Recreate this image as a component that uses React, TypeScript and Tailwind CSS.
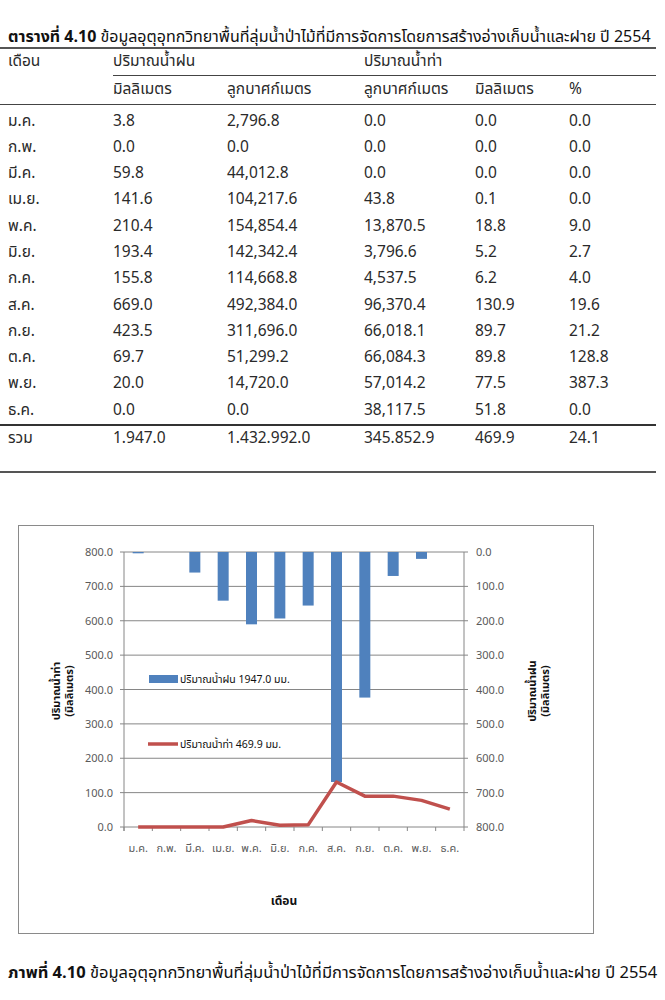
const FONT = '"Noto Sans Thai", "Noto Sans", "DejaVu Sans", sans-serif'

const rows = [
  ["ม.ค.", "3.8", "2,796.8", "0.0", "0.0", "0.0"],
  ["ก.พ.", "0.0", "0.0", "0.0", "0.0", "0.0"],
  ["มี.ค.", "59.8", "44,012.8", "0.0", "0.0", "0.0"],
  ["เม.ย.", "141.6", "104,217.6", "43.8", "0.1", "0.0"],
  ["พ.ค.", "210.4", "154,854.4", "13,870.5", "18.8", "9.0"],
  ["มิ.ย.", "193.4", "142,342.4", "3,796.6", "5.2", "2.7"],
  ["ก.ค.", "155.8", "114,668.8", "4,537.5", "6.2", "4.0"],
  ["ส.ค.", "669.0", "492,384.0", "96,370.4", "130.9", "19.6"],
  ["ก.ย.", "423.5", "311,696.0", "66,018.1", "89.7", "21.2"],
  ["ต.ค.", "69.7", "51,299.2", "66,084.3", "89.8", "128.8"],
  ["พ.ย.", "20.0", "14,720.0", "57,014.2", "77.5", "387.3"],
  ["ธ.ค.", "0.0", "0.0", "38,117.5", "51.8", "0.0"],
]
const total = ["รวม", "1.947.0", "1.432.992.0", "345.852.9", "469.9", "24.1"]

const GRID = "grid grid-cols-[105px_114px_137px_111px_94px_1fr] pl-[8px]"

// chart geometry, relative to the frame
const L = 105, R = 445, T = 26, B = 301
const K = (B - T) / 800
const CW = (R - L) / 12
const rain = [3.8, 0, 59.8, 141.6, 210.4, 193.4, 155.8, 669, 423.5, 69.7, 20, 0]
const runoff = [0, 0, 0, 0.1, 18.8, 5.2, 6.2, 130.9, 89.7, 89.8, 77.5, 51.8]
const months = rows.map(r => r[0])

function Chart() {
  const ticks = [0, 1, 2, 3, 4, 5, 6, 7, 8]
  const line = runoff.map((v, i) => `${L + CW * (i + 0.5)},${B - v * K}`).join(" ")
  return (
    <svg width="573" height="406" style={{ fontFamily: FONT }}>
      {ticks.map(i => {
        const y = T + i * 34.375
        return (
          <g key={i}>
            <line x1={101} x2={449} y1={y} y2={y} stroke="#868686" strokeWidth={1} />
            <text x={94} y={y + 4} fontSize={11} fill="#5a5a5a" textAnchor="end">{((8 - i) * 100).toFixed(1)}</text>
            <text x={457} y={y + 4} fontSize={11} fill="#5a5a5a">{(i * 100).toFixed(1)}</text>
          </g>
        )
      })}
      <line x1={L} x2={L} y1={T} y2={B + 4} stroke="#868686" />
      <line x1={R} x2={R} y1={T} y2={B} stroke="#868686" />
      {Array.from({ length: 13 }, (_, i) => (
        <line key={i} x1={L + CW * i} x2={L + CW * i} y1={B} y2={B + 4} stroke="#868686" />
      ))}
      {rain.map((v, i) => (
        <rect key={i} x={L + CW * (i + 0.5) - 5.5} y={T} width={11} height={v * K} fill="#4f81bd" />
      ))}
      <polyline points={line} fill="none" stroke="#c0504d" strokeWidth={3.5} strokeLinejoin="round" />
      {months.map((m, i) => (
        <text key={m} x={L + CW * (i + 0.5)} y={326} fontSize={11} fill="#5a5a5a" textAnchor="middle">{m}</text>
      ))}
      <text x={265} y={379} fontSize={12} fontWeight="bold" fill="#111" textAnchor="middle">เดือน</text>

      <rect x={130} y={149} width={29} height={8} fill="#4f81bd" />
      <text x={161} y={157} fontSize={10.5} fill="#111">ปริมาณน้ำฝน 1947.0 มม.</text>
      <line x1={129} x2={159} y1={218} y2={218} stroke="#c0504d" strokeWidth={3.5} />
      <text x={161} y={222} fontSize={10.5} fill="#111">ปริมาณน้ำท่า 469.9 มม.</text>

      <text transform="rotate(-90 44 165)" x={44} y={165} fontSize={11} fontWeight="bold" fill="#111" textAnchor="middle">
        <tspan x={44} dy={-3}>ปริมาณน้ำท่า</tspan>
        <tspan x={44} dy={13}>(มิลลิเมตร)</tspan>
      </text>
      <text transform="rotate(-90 520 165)" x={520} y={165} fontSize={11} fontWeight="bold" fill="#111" textAnchor="middle">
        <tspan x={520} dy={-3}>ปริมาณน้ำฝน</tspan>
        <tspan x={520} dy={13}>(มิลลิเมตร)</tspan>
      </text>
    </svg>
  )
}

export default function App() {
  return (
    <div className="w-[665px] h-[1000px] bg-white text-[#2a2a2a] overflow-hidden" style={{ fontFamily: FONT }}>
      <div className="w-[656px] pt-[26px]">
        <div className="h-[23px] pl-[8px] text-[16px] leading-[23px] whitespace-nowrap border-b-2 border-[#555] text-[#111]">
          <span className="font-bold">ตารางที่ 4.10</span> ข้อมูลอุตุอุทกวิทยาพื้นที่ลุ่มน้ำป่าไม้ที่มีการจัดการโดยการสร้างอ่างเก็บน้ำและฝาย ปี 2554
        </div>

        <div className="text-[15.5px] border-b border-[#444]">
          <div className={GRID + " h-[26px] items-center"}>
            <div>เดือน</div>
            <div className="col-span-2">ปริมาณน้ำฝน</div>
            <div className="col-span-3">ปริมาณน้ำท่า</div>
          </div>
          <div className="flex">
            <div className="w-[113px]" />
            <div className="flex-1 border-t border-[#444]" />
          </div>
          <div className={GRID + " h-[28px] items-center"}>
            <div />
            <div>มิลลิเมตร</div>
            <div>ลูกบาศก์เมตร</div>
            <div>ลูกบาศก์เมตร</div>
            <div>มิลลิเมตร</div>
            <div>%</div>
          </div>
        </div>

        <div className="text-[15.5px] pt-[3px] border-b-2 border-[#333]">
          {rows.map(r => (
            <div key={r[0]} className={GRID + " h-[26.3px] items-center"}>
              {r.map((c, i) => <div key={i}>{c}</div>)}
            </div>
          ))}
        </div>

        <div className="text-[15.5px] pb-[19px] border-b-2 border-[#555]">
          <div className={GRID + " h-[26px] items-center"}>
            {total.map((c, i) => <div key={i}>{c}</div>)}
          </div>
        </div>
      </div>

      <div className="mt-[52px] ml-[18px] w-[576px] h-[409px] border border-[#8a8a8a]">
        <Chart />
      </div>

      <div className="mt-[27px] pl-[8px] text-[16.5px] whitespace-nowrap text-[#111]">
        <span className="font-bold">ภาพที่ 4.10</span> ข้อมูลอุตุอุทกวิทยาพื้นที่ลุ่มน้ำป่าไม้ที่มีการจัดการโดยการสร้างอ่างเก็บน้ำและฝาย ปี 2554
      </div>
    </div>
  )
}
